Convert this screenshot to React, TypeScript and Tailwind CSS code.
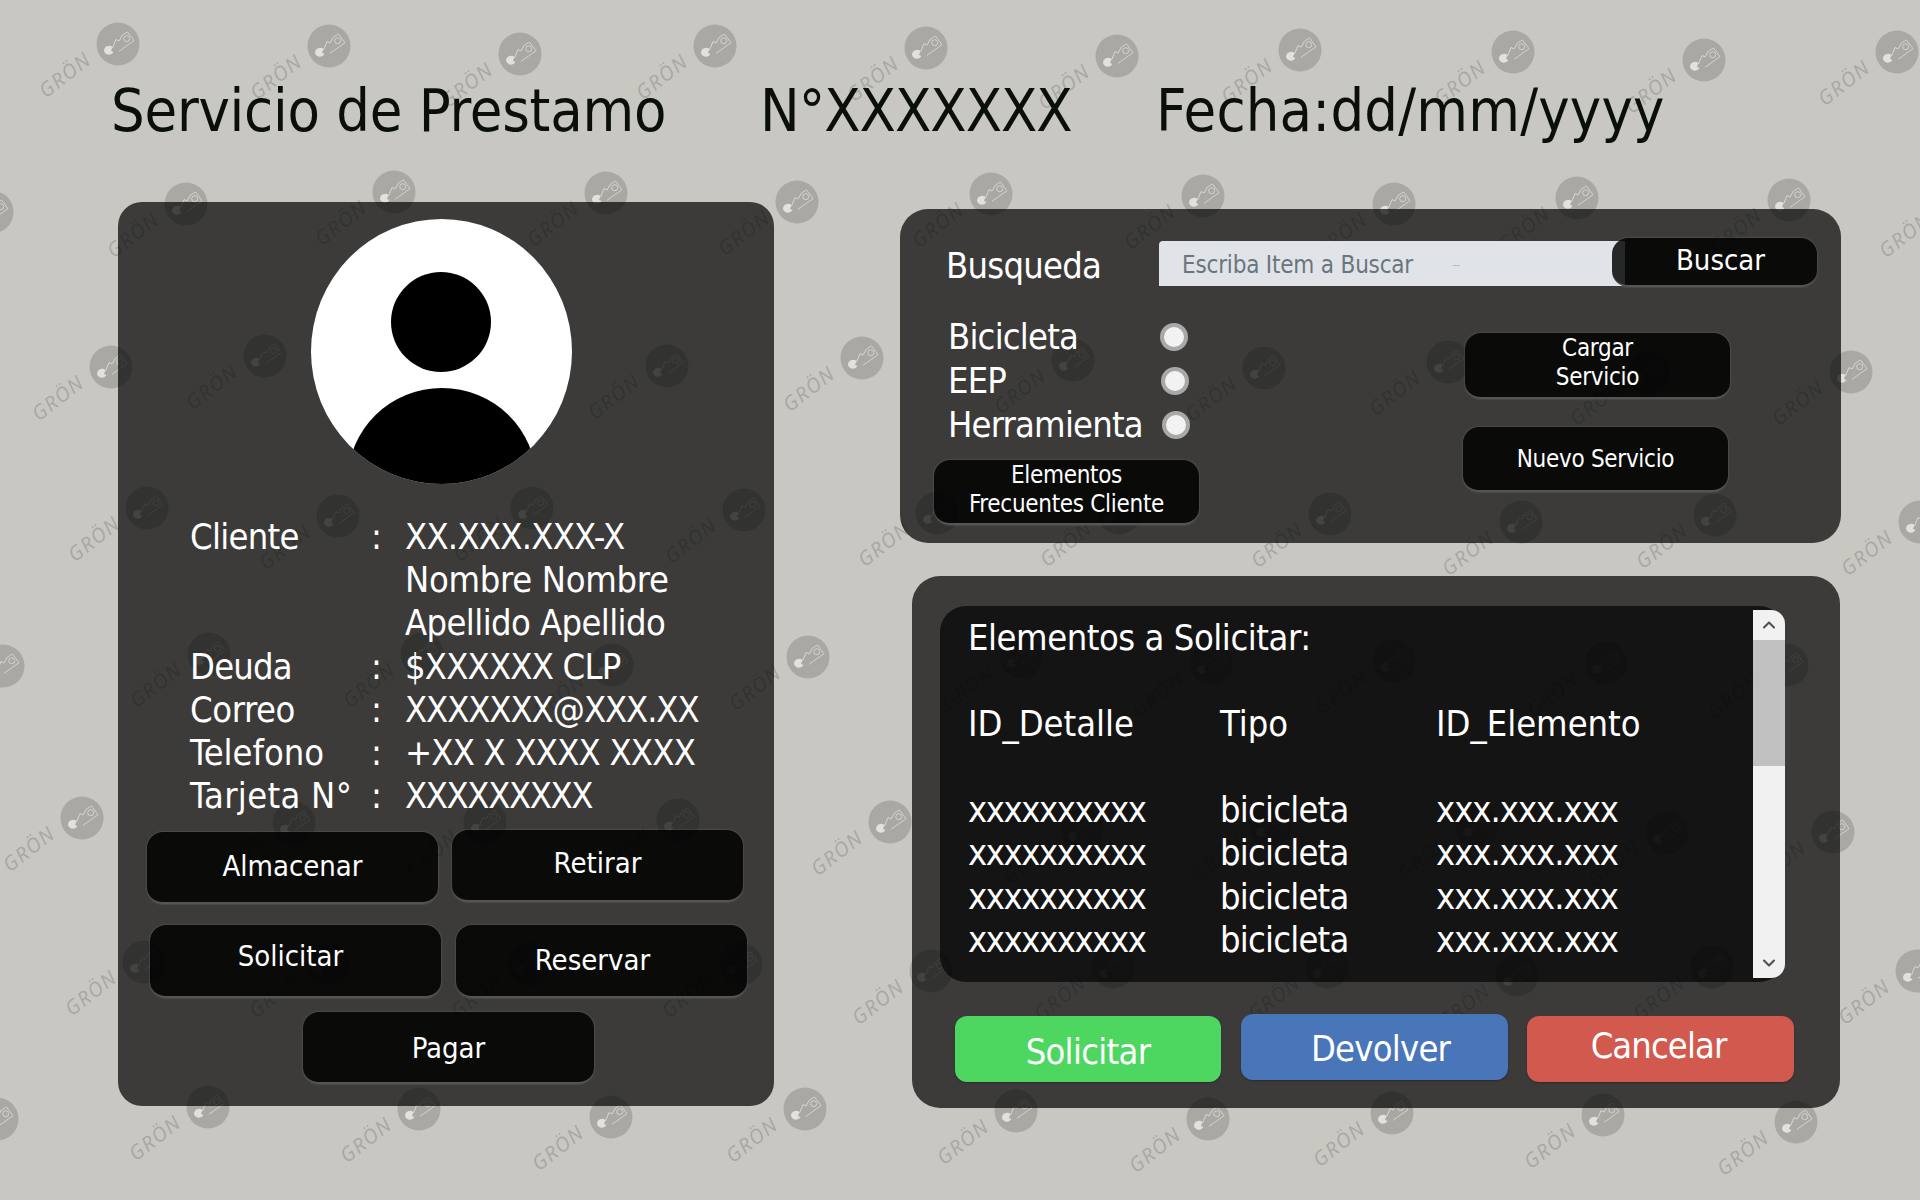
import { ChevronDown, ChevronUp } from "lucide-react";
import type { ReactNode } from "react";

// centres of the watermark discs, read off the picture
const marks: [number, number][] = [
  [118, 44], [329, 46], [520, 54], [715, 46], [926, 48], [1117, 56], [1300, 50], [1513, 52], [1704, 60], [1897, 52],
  [-8, 212], [186, 204], [394, 192], [606, 193], [797, 202], [991, 194], [1203, 196], [1394, 204], [1577, 198], [1789, 200], [1958, 204],
  [111, 367], [265, 356], [464, 362], [667, 366], [862, 358], [1073, 360], [1264, 368], [1448, 362], [1649, 372], [1851, 372],
  [147, 508], [338, 516], [532, 508], [744, 510], [937, 513], [1119, 513], [1330, 514], [1521, 522], [1715, 515], [1920, 522],
  [3, 666], [209, 654], [422, 654], [612, 665], [808, 657], [1021, 657], [1211, 663], [1394, 661], [1606, 663], [1787, 665],
  [82, 818], [294, 823], [485, 822], [678, 820], [890, 822], [1082, 830], [1270, 826], [1477, 826], [1667, 833], [1833, 832],
  [144, 962], [328, 964], [530, 964], [741, 964], [931, 971], [1113, 967], [1327, 967], [1517, 975], [1712, 967], [1917, 971],
  [-3, 1119], [208, 1107], [419, 1109], [611, 1117], [805, 1109], [1016, 1111], [1208, 1119], [1392, 1113], [1603, 1115], [1796, 1122],
];

const clientRows = [
  { label: "Cliente", labelClass: "tracking-[-0.7px]", colon: ":", value: "XX.XXX.XXX-X", valueClass: "tracking-[-0.75px]" },
  { label: "", labelClass: "", colon: "", value: "Nombre Nombre", valueClass: "tracking-[-0.3px]" },
  { label: "", labelClass: "", colon: "", value: "Apellido Apellido", valueClass: "tracking-[-0.6px]" },
  { label: "Deuda", labelClass: "tracking-[-0.8px]", colon: ":", value: "$XXXXXX CLP", valueClass: "tracking-[-0.8px]" },
  { label: "Correo", labelClass: "tracking-[-0.4px]", colon: ":", value: "XXXXXXX@XXX.XX", valueClass: "tracking-[-1.1px]" },
  { label: "Telefono", labelClass: "", colon: ":", value: "+XX X XXXX XXXX", valueClass: "tracking-[-0.8px]" },
  { label: "Tarjeta N°", labelClass: "tracking-[0.3px]", colon: ":", value: "XXXXXXXXX", valueClass: "tracking-[-1.4px]" },
];

const itemRows = ["xxxxxxxxxx", "xxxxxxxxxx", "xxxxxxxxxx", "xxxxxxxxxx"];

const Watermark = ({ x, y }: { x: number; y: number }) => (
  <div className="absolute h-0 w-0" style={{ left: x, top: y }}>
    <svg width="44" height="44" viewBox="-22 -22 44 44" className="absolute -left-[22px] -top-[22px]">
      <circle r="21.5" fill="#a9a8a3" />
      <path d="M-14 7 A5.2 5.2 0 0 1 -5.5 3 L-7 7 L-4.5 8 A5.2 5.2 0 0 1 -14 7 Z" fill="#e2e1dd" />
      <path d="M-5.5 4 L-2 -4.5 L1 -3 L4.5 -9" fill="none" stroke="#d8d7d3" strokeWidth="1" />
      <path d="M1 7.3 L16 -3.3 L9.5 -12 L4.5 -9" fill="none" stroke="#d8d7d3" strokeWidth="0.9" />
      <circle cx="8.7" cy="-5.3" r="3" fill="none" stroke="#d8d7d3" strokeWidth="0.9" />
    </svg>
    <span className="absolute -left-[88px] top-[21px] w-[70px] -rotate-[38deg] text-center font-['Open_Sans',sans-serif] text-[20px] leading-none tracking-[1.5px] text-[#a9a8a3] italic">
      GRÖN
    </span>
  </div>
);

const DarkButton = ({ className, children }: { className: string; children: ReactNode }) => (
  <button className={`rounded-2xl border-b-2 border-[#555] bg-black/[.83] text-center text-white shadow-[0_0_2px_rgba(255,255,255,.25)] ${className}`}>
    {children}
  </button>
);

const Radio = ({ className }: { className: string }) => (
  <span className={`h-[28px] w-[28px] rounded-full border-[4px] border-[#a8a8a8] bg-[#f2f2f2] ${className}`} />
);

const App = () => {
  return (
    <div className="relative h-[1200px] w-[1920px] overflow-hidden bg-[#c8c7c2] font-['DejaVu_Sans_Condensed','DejaVu_Sans',sans-serif]">
      <div className="absolute inset-0">
        {marks.map(([x, y]) => (
          <Watermark key={`${x}-${y}`} x={x} y={y} />
        ))}
      </div>

      <div className="relative">
        <h1 className="flex pl-[111px] pt-[69px] text-[59px] leading-[84px] font-normal text-[#0a0f0a]">
          <span className="w-[649px] tracking-[-0.25px]">Servicio de Prestamo</span>
          <span className="w-[396px] tracking-[-1px]">N°XXXXXXX</span>
          <span className="tracking-[0.2px]">Fecha:dd/mm/yyyy</span>
        </h1>

        <div className="mt-[49px] flex items-start pl-[118px]">
          {/* cliente */}
          <section className="h-[904px] w-[656px] rounded-3xl bg-black/70 pt-[17px] text-white">
            <svg width="261" height="265" viewBox="0 0 261 265" className="ml-[193px]">
              <clipPath id="avatar">
                <ellipse cx="130.5" cy="132.5" rx="130.5" ry="132.5" />
              </clipPath>
              <ellipse cx="130.5" cy="132.5" rx="130.5" ry="132.5" fill="#fff" />
              <circle cx="130" cy="103" r="50" fill="#000" />
              <ellipse cx="131" cy="261" rx="94" ry="92" fill="#000" clipPath="url(#avatar)" />
            </svg>

            <div className="mt-[31px] grid grid-cols-[178px_37px_1fr] pl-[72px] text-[36px] leading-[43.2px]">
              {clientRows.map((row) => (
                <div key={row.value} className="contents">
                  <span className={row.labelClass}>{row.label}</span>
                  <span className="pl-[3px]">{row.colon}</span>
                  <span className={row.valueClass}>{row.value}</span>
                </div>
              ))}
            </div>

            <div className="mt-[13px] grid grid-cols-[291px_291px] gap-x-[14px] pl-[29px] text-[29px]">
              <DarkButton className="mt-[2px] h-[72px] pb-[2px]">Almacenar</DarkButton>
              <DarkButton className="h-[72px] pb-[4px]">Retirar</DarkButton>
              <DarkButton className="mt-[21px] ml-[3px] h-[73px] w-[291px] pr-[10px] pb-[8px]">Solicitar</DarkButton>
              <DarkButton className="mt-[21px] ml-[4px] h-[73px] w-[291px] pr-[18px]">Reservar</DarkButton>
            </div>
            <DarkButton className="mt-[14px] ml-[185px] h-[72px] w-[291px] pt-[3px] text-[29px]">Pagar</DarkButton>
          </section>

          <div className="mt-[7px] ml-[126px] flex flex-col items-start">
            {/* busqueda */}
            <section className="h-[334px] w-[941px] rounded-[28px] bg-black/70 text-white">
              <div className="flex pt-[29px] pl-[46px]">
                <span className="w-[213px] pt-[3px] text-[36px] leading-[50px] tracking-[-0.75px]">Busqueda</span>
                <div className="mt-[3px] flex h-[45px] w-[466px] items-center gap-[40px] rounded-tl-[4px] bg-[#e0e4e8] pt-[3px] pl-[23px] text-[24px] tracking-[-0.2px] text-[#6c757d]">
                  Escriba Item a Buscar
                  <span className="h-px w-[7px] bg-[#b8bcc0]" />
                </div>
                <DarkButton className="relative -ml-[13px] h-[49px] w-[205px] pb-[1px] pl-[12px] text-[29px]">Buscar</DarkButton>
              </div>

              <div className="flex">
                <div>
                  <div className="mt-[24px] grid grid-cols-[213px_28px] items-center pl-[48px] text-[36px] leading-[44px] tracking-[-0.8px]">
                    <span>Bicicleta</span>
                    <Radio className="-ml-[1px]" />
                    <span>EEP</span>
                    <Radio />
                    <span>Herramienta</span>
                    <Radio className="ml-[1px]" />
                  </div>
                  <DarkButton className="mt-[13px] ml-[34px] h-[65px] w-[265px] pb-[4px] text-[24px] leading-[29px] tracking-[-0.3px]">
                    Elementos
                    <br />
                    Frecuentes Cliente
                  </DarkButton>
                </div>
                <div className="mt-[42px] ml-[264px] flex flex-col gap-[28px]">
                  <DarkButton className="ml-[2px] h-[66px] w-[265px] pb-[4px] text-[24px] leading-[29px] tracking-[-0.3px]">
                    Cargar
                    <br />
                    Servicio
                  </DarkButton>
                  <DarkButton className="h-[65px] w-[265px] text-[24px] tracking-[-0.3px]">Nuevo Servicio</DarkButton>
                </div>
              </div>
            </section>

            {/* elementos */}
            <section className="mt-[33px] ml-[12px] h-[532px] w-[928px] rounded-[28px] bg-black/70 pt-[30px] pl-[28px] text-white">
              <div className="flex h-[376px] w-[845px] justify-between rounded-[26px] bg-black/65 pl-[28px] text-[36px]">
                <div className="pt-[7px] leading-[43.2px]">
                  <div className="leading-[50px] tracking-[-0.45px]">Elementos a Solicitar:</div>
                  <div className="mt-[39px] grid grid-cols-[252px_216px_1fr]">
                    <span>ID_Detalle</span>
                    <span>Tipo</span>
                    <span>ID_Elemento</span>
                  </div>
                  <div className="mt-[43px] grid grid-cols-[252px_216px_1fr]">
                    {itemRows.map((row, i) => (
                      <div key={i} className="contents">
                        <span className="tracking-[-1.4px]">{row}</span>
                        <span className="tracking-[-0.8px]">bicicleta</span>
                        <span className="tracking-[-1px]">xxx.xxx.xxx</span>
                      </div>
                    ))}
                  </div>
                </div>
                <div className="mt-[4px] flex h-[368px] w-[32px] flex-col items-center rounded-r-[14px] bg-[#f1f1f1] text-[#505050]">
                  <div className="flex h-[30px] w-full items-center justify-center">
                    <ChevronUp size={20} strokeWidth={2.5} />
                  </div>
                  <div className="h-[126px] w-full bg-[#c1c1c1]" />
                  <div className="flex-1" />
                  <div className="flex h-[30px] w-full items-center justify-center">
                    <ChevronDown size={20} strokeWidth={2.5} />
                  </div>
                </div>
              </div>

              <div className="mt-[32px] ml-[15px] flex items-start gap-[20px] text-[36px]">
                <button className="mt-[2px] h-[66px] w-[266px] rounded-xl bg-[#4dd660] pt-[6px] tracking-[-0.7px] shadow-[0_1px_2px_rgba(0,0,0,.3)]">Solicitar</button>
                <button className="h-[66px] w-[267px] rounded-xl bg-[#4876b8] pt-[4px] pl-[12px] tracking-[-0.75px] shadow-[0_1px_2px_rgba(0,0,0,.3)]">Devolver</button>
                <button className="mt-[2px] -ml-[1px] h-[66px] w-[267px] rounded-xl bg-[#d2594e] pr-[4px] pb-[6px] tracking-[-0.9px] shadow-[0_1px_2px_rgba(0,0,0,.3)]">Cancelar</button>
              </div>
            </section>
          </div>
        </div>
      </div>
    </div>
  );
};

export default App;
